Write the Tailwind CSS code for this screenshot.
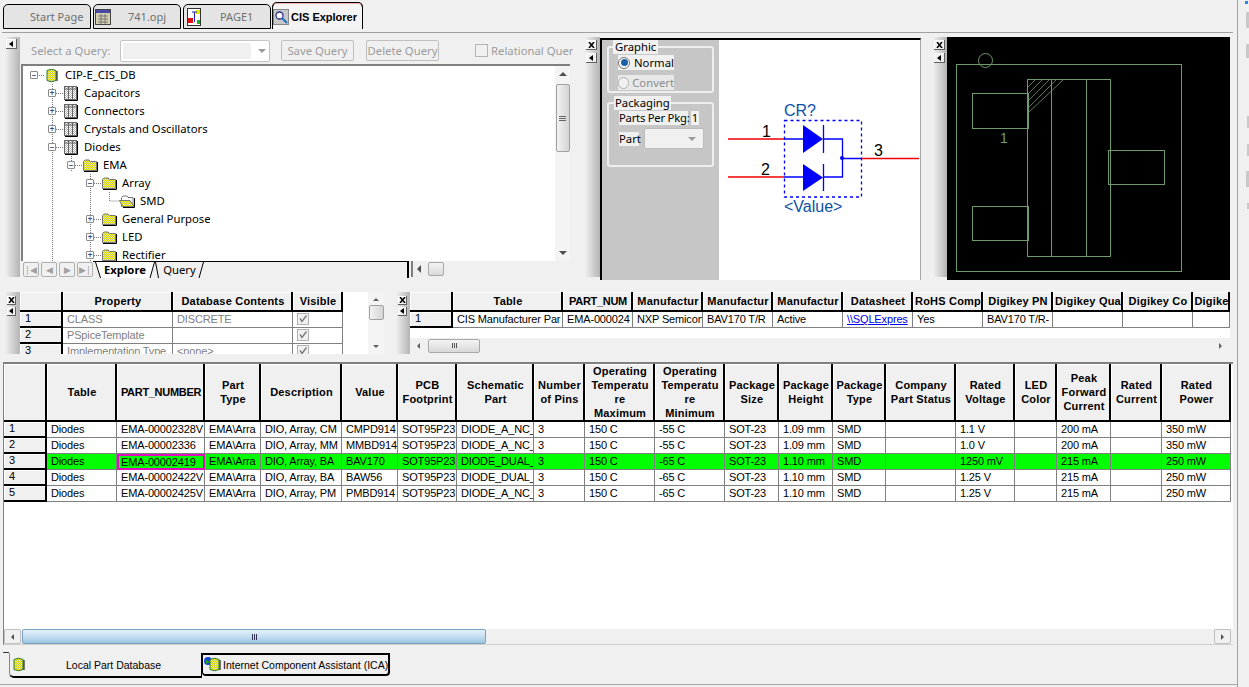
<!DOCTYPE html>
<html lang="en">
<head>
<meta charset="UTF-8">
<title>CIS Explorer</title>
<script src="https://cdn.jsdelivr.net/npm/@tailwindcss/browser@4"></script>
</head>
<body class="bg-[#f0f0f0] overflow-hidden">
<svg width="0" height="0" class="absolute">
  <defs>
    <pattern id="dither" width="2" height="2" patternUnits="userSpaceOnUse">
      <rect width="2" height="2" fill="#ffff00"/><rect width="1" height="1" fill="#c0c080"/><rect x="1" y="1" width="1" height="1" fill="#c0c080"/>
    </pattern>
    <pattern id="gridfill" width="2" height="2" patternUnits="userSpaceOnUse">
      <rect width="2" height="2" fill="#fff"/><rect width="1" height="1" fill="#b4b4b4"/><rect x="1" y="1" width="1" height="1" fill="#b4b4b4"/>
    </pattern>
    <symbol id="ic-table" viewBox="0 0 14 15">
      <rect x=".5" y=".5" width="12" height="13" fill="url(#gridfill)" stroke="#666"/>
      <path d="M.5 3H12.500M4.500 .5V13.500M8.500 .5V13.500" stroke="#666" fill="none"/>
      <path d="M13.500 1V14.500H1" stroke="#000" fill="none"/>
    </symbol>
    <symbol id="ic-folder" viewBox="0 0 15 13">
      <path d="M.5 11.500V2.500L2 1H6L7.500 2.500H13.500V11.500Z" fill="url(#dither)" stroke="#777"/>
      <path d="M14.500 3V12.500H1" stroke="#000" fill="none"/>
    </symbol>
    <symbol id="ic-open" viewBox="0 0 16 13">
      <path d="M2.500 11.500V2.500L4 1H8L9 2.500H14V11.500Z" fill="#fff" stroke="#777"/>
      <path d="M.5 5.500H11L15 11.500H3.500Z" fill="url(#dither)" stroke="#777"/>
      <path d="M15.500 3V12.500H4" stroke="#000" fill="none"/>
    </symbol>
    <symbol id="ic-db" viewBox="0 0 12 15">
      <path d="M1 2.500V12.500Q5.500 15 10 12.500V2.500Q5.500 0 1 2.500Z" fill="url(#dither)" stroke="#2c7a2c"/>
      <path d="M11 3V13" stroke="#000"/>
    </symbol>
  </defs>
</svg>

<div class="w-[1249px] h-[687px] flex text-black font-['Liberation_Sans',Arial,sans-serif] text-[11px] leading-[14px]">
  <div class="w-[1237px] h-[687px] flex flex-col shrink-0">

    <!-- document tabs -->
    <div class="h-[33px] ml-[2px] w-[1231px] border-b border-[#a0a0a0] flex items-start pt-[4px] pl-[1px] shrink-0 font-['Noto_Sans',sans-serif] text-[11px]">
      <div class="w-[88px] h-[25px] bg-[#e4e4e4] border border-black rounded-t-[5px] flex items-center pl-[26px] text-[#707070]">Start Page</div>
      <div class="ml-[2px] w-[88px] h-[25px] bg-[#e4e4e4] border border-black rounded-t-[5px] flex items-center text-[#707070]">
        <svg width="16" height="16" viewBox="0 0 16 16" class="ml-[1px]"><rect x=".5" y=".5" width="15" height="15" fill="#d4d0b0" stroke="#444"/><rect x="1" y="1" width="14" height="3" fill="#4848a8"/><path d="M3 7H13M3 10H13M3 13H13M6 5V15M10 5V15" stroke="#777"/></svg>
        <span class="ml-[17px]">741.opj</span>
      </div>
      <div class="ml-[2px] w-[88px] h-[25px] bg-[#e4e4e4] border border-black rounded-t-[5px] flex items-center text-[#707070]">
        <svg width="14" height="18" viewBox="0 0 14 18" class="ml-[3px]"><rect x=".5" y=".5" width="13" height="17" fill="#fff" stroke="#333"/><rect x="1" y="10" width="5" height="5" fill="#e01010"/><rect x="9" y="2" width="4" height="4" fill="#e8e800"/><rect x="10" y="12" width="3" height="4" fill="#20b020"/><path d="M5 4H10M7.500 4V14" stroke="#2020c0"/></svg>
        <span class="ml-[19px]">PAGE1</span>
      </div>
      <div class="ml-[1px] w-[91px] h-[26px] -mt-[1px] bg-[#f4f4f4] border border-black border-b-0 border-t-[#ffb0b0] shadow-[0_-1px_0_#000] rounded-t-[5px] flex items-center font-bold font-['Liberation_Sans',sans-serif]">
        <svg width="16" height="16" viewBox="0 0 16 16" class="mr-[2px]"><rect x=".5" y=".5" width="15" height="15" fill="#c8c8c8" stroke="#888"/><circle cx="6.500" cy="6.500" r="3.500" fill="#fff" stroke="#303090" stroke-width="1.300"/><path d="M9 9L14 14" stroke="#2070c0" stroke-width="2"/></svg>
        <span>CIS Explorer</span>
      </div>
    </div>

    <!-- upper panes -->
    <div class="flex h-[243px] mt-[4px] shrink-0">
      <div class="ml-[5px] w-[15px] h-[240px] bg-gradient-to-r from-[#f0f0f0] to-[#b4b4b4] pl-[1px] pt-[2px] shrink-0">
        <div data-btn="left"></div>
      </div>
      <div class="w-[553px] shrink-0 flex flex-col">
        <div class="h-[27px] flex items-center pl-[11px] text-[#9c9c9c] font-['Noto_Sans',sans-serif] text-[11.3px] shrink-0 overflow-hidden">
          <span class="w-[89px] shrink-0">Select a Query:</span>
          <div class="w-[150px] h-[22px] border border-[#c4c4c4] rounded-[2px] bg-white flex items-center p-[2px] shrink-0">
            <div class="w-[128px] h-[16px] bg-[#f0f0f0]"></div>
            <div class="ml-[7px] w-0 h-0 border-x-[4px] border-x-transparent border-t-[4px] border-t-[#9a9a9a]"></div>
          </div>
          <div class="ml-[11px] w-[73px] h-[21px] border border-[#c0c0c0] rounded-[2px] flex items-center justify-center shrink-0 whitespace-nowrap">Save Query</div>
          <div class="ml-[12px] w-[73px] h-[21px] border border-[#c0c0c0] rounded-[2px] flex items-center justify-center shrink-0 whitespace-nowrap">Delete Query</div>
          <div class="ml-[36px] w-[13px] h-[13px] border border-[#b4b4b4] shrink-0"></div>
          <span class="ml-[3px] whitespace-nowrap">Relational Query</span>
        </div>
        <div class="relative h-[197px] ml-[1px] w-[549px] border-t-2 border-l-2 border-[#808080] bg-white overflow-hidden shrink-0">
          <!-- connector lines of the tree -->
          <svg class="absolute left-0 top-0" width="140" height="197" viewBox="23 66 140 197">
            <g stroke="#777" stroke-dasharray="1 1" fill="none">
              <path d="M52.500 84V262M71.500 156V172M90.500 174V262M109.500 192V201H120"/>
              <path d="M37 75.500H45M56 93.500H64M56 111.500H64M56 129.500H64M56 147.500H64M75 165.500H83M94 183.500H102M94 219.500H102M94 237.500H102M94 255.500H102"/>
            </g>
          </svg>
          <div id="tree" class="relative font-['Noto_Sans',sans-serif] text-[11.3px] leading-[18px]"></div>
          <div class="absolute right-0 top-0 w-[15px] h-full bg-[#f4f4f4] flex flex-col items-center">
            <div class="mt-[6px] w-0 h-0 border-x-[4px] border-x-transparent border-b-[4px] border-b-[#505050]"></div>
            <div class="mt-[8px] w-[14px] h-[68px] rounded-[2px] border border-[#a0a0a0] bg-gradient-to-r from-[#f2f2f2] to-[#d4d4d4] flex flex-col items-center justify-center gap-[1px]">
              <div class="w-[7px] h-px bg-[#666]"></div><div class="w-[7px] h-px bg-[#666]"></div><div class="w-[7px] h-px bg-[#666]"></div>
            </div>
            <div class="mt-auto mb-[6px] w-0 h-0 border-x-[4px] border-x-transparent border-t-[4px] border-t-[#505050]"></div>
          </div>
        </div>
        <div class="h-[17px] ml-[3px] flex shrink-0 font-['Noto_Sans',sans-serif] text-[11.3px]">
          <div class="flex gap-[2px] pt-[1px]">
            <div class="w-[16px] h-[15px] border border-[#b0b0b0] rounded-[2px] text-[#a0a0a0] text-[9px] leading-[13px] text-center">|◀</div>
            <div class="w-[16px] h-[15px] border border-[#b0b0b0] rounded-[2px] text-[#a0a0a0] text-[9px] leading-[13px] text-center">◀</div>
            <div class="w-[16px] h-[15px] border border-[#b0b0b0] rounded-[2px] text-[#a0a0a0] text-[9px] leading-[13px] text-center">▶</div>
            <div class="w-[16px] h-[15px] border border-[#b0b0b0] rounded-[2px] text-[#a0a0a0] text-[9px] leading-[13px] text-center">▶|</div>
          </div>
          <div class="w-[316px] border-t border-r-2 border-black flex h-[17px] pl-[2px]">
            <div class="relative w-[60px] h-[16px] text-center leading-[16px] font-bold">
              <svg class="absolute left-0 top-0" width="60" height="16"><path d="M0 0L5 16H55L60 0Z" fill="#fff"/><path d="M.5 0L5.500 16M59.500 0L55 16" stroke="#000" fill="none"/></svg>
              <span class="relative">Explore</span>
            </div>
            <div class="relative w-[49px] h-[16px] text-center leading-[16px]">
              <svg class="absolute left-0 top-0" width="49" height="16"><path d="M.5 0L3.500 16M48.500 0L44 16" stroke="#000" fill="none"/></svg>
              <span class="relative">Query</span>
            </div>
          </div>
          <div class="ml-[2px] w-[155px] h-[16px] flex items-center border-l-2 border-[#808080] pl-[4px]">
            <div class="w-0 h-0 border-y-[4px] border-y-transparent border-r-[4px] border-r-[#505050]"></div>
            <div class="ml-[7px] w-[16px] h-[14px] border border-[#a8a8a8] rounded-[2px] bg-gradient-to-b from-[#f4f4f4] to-[#d8d8d8]"></div>
          </div>
        </div>
      </div>

      <div class="ml-[12px] w-[15px] h-[240px] bg-gradient-to-r from-[#f0f0f0] to-[#b4b4b4] pt-[3px] pl-[1px] shrink-0 flex flex-col gap-[3px]">
        <div data-btn="close"></div><div data-btn="left"></div>
      </div>
      <div class="w-[321px] h-[242px] border-l-2 border-t-2 border-black border-r-[#a8a8a8] border-r flex shrink-0 mt-px">
        <div class="w-[117px] h-full bg-[#c6c6c6] pl-[5px] pt-[6px] font-['Noto_Sans',sans-serif] text-[11.3px] shrink-0">
          <div class="w-[107px] h-[47px] border-2 border-[#eeeeee] rounded-[3px]">
            <div class="-mt-[8px] ml-[4px] w-fit bg-[#f0f0f0] px-[2px]">Graphic</div>
            <div class="ml-[9px] mt-[1px] w-[56px] h-[15px] bg-[#f0f0f0] flex items-center">
              <div class="w-[12px] h-[12px] rounded-full border border-[#707070] bg-white flex items-center justify-center"><div class="w-[7px] h-[7px] rounded-full bg-[#1a5fa8]"></div></div>
              <span class="ml-[4px]">Normal</span>
            </div>
            <div class="ml-[9px] mt-[5px] w-[56px] h-[15px] bg-[#e8e8e8] flex items-center text-[#8c8c8c]">
              <div class="w-[12px] h-[12px] rounded-full border border-[#b0b0b0] bg-[#f0f0f0]"></div>
              <span class="ml-[3px]">Convert</span>
            </div>
          </div>
          <div class="mt-[9px] w-[107px] h-[65px] border-2 border-[#eeeeee] rounded-[3px]">
            <div class="-mt-[8px] ml-[5px] w-fit bg-[#f0f0f0] px-[1px]">Packaging</div>
            <div class="ml-[10px] mt-[1px] flex">
              <span class="bg-[#f0f0f0] w-[69px] whitespace-nowrap tracking-[-0.25px]">Parts Per Pkg:</span>
              <span class="ml-[3px] bg-[#f0f0f0] w-[8px] text-center">1</span>
            </div>
            <div class="ml-[10px] mt-[3px] flex items-center">
              <span class="bg-[#f0f0f0] w-[20px]">Part</span>
              <div class="ml-[5px] w-[60px] h-[21px] bg-[#f0f0f0] border border-[#bcbcbc] rounded-[2px] flex items-center justify-end pr-[7px]">
                <div class="w-0 h-0 border-x-[4px] border-x-transparent border-t-[4px] border-t-[#9a9a9a]"></div>
              </div>
            </div>
          </div>
        </div>
        <svg width="201" height="240" viewBox="719 40 201 240" class="bg-white shrink-0">
          <g fill="none" stroke-width="1.300">
            <path d="M728 139H784M728 177H784M861 158.500H919" stroke="#f00000"/>
            <path d="M784 139H803M823 139H842.500V177H823M784 177H803M842.500 158.500H861" stroke="#0000ff"/>
            <path d="M823.500 125V153M823.500 164V191" stroke="#0000ff"/>
            <rect x="784.500" y="120.500" width="77" height="76.500" stroke="#0000ff" stroke-dasharray="3 3"/>
          </g>
          <path d="M803 125L823 139L803 153ZM803 164L823 177.500L803 191Z" fill="#0000ff"/>
          <circle cx="842" cy="158" r="2" fill="#0000ff"/>
          <g font-family="Liberation Sans, sans-serif" font-size="16">
            <text x="762" y="137">1</text>
            <text x="761" y="175">2</text>
            <text x="874" y="156">3</text>
            <text x="784" y="116" fill="#0a50a8">CR?</text>
            <text x="784" y="212" fill="#0a50a8">&lt;Value&gt;</text>
          </g>
        </svg>
      </div>

      <div class="ml-[12px] w-[14px] h-[240px] bg-gradient-to-r from-[#f0f0f0] to-[#b4b4b4] pt-[3px] pl-[1px] shrink-0 flex flex-col gap-[3px]">
        <div data-btn="close"></div><div data-btn="left"></div>
      </div>
      <svg width="283" height="243" viewBox="947 37 283 243" class="bg-black shrink-0">
        <g fill="none" stroke="#6f9a6c" stroke-width="1">
          <rect x="956.500" y="64.500" width="225" height="207"/>
          <circle cx="985.500" cy="60.500" r="7"/>
          <rect x="1027.500" y="79.500" width="83" height="177"/>
          <path d="M1051.500 79V256M1086.500 79V256"/>
          <rect x="972.500" y="93.500" width="56" height="35"/>
          <rect x="972.500" y="206.500" width="56" height="34"/>
          <rect x="1108.500" y="150.500" width="56" height="34"/>
          <path d="M1035 80L1028 87M1042 80L1028 94M1049 80L1028 101M1056 80L1028 108M1063 80L1028 113" stroke-width=".8"/>
        </g>
        <text x="1000" y="143" fill="#6f9a6c" font-family="Liberation Sans, sans-serif" font-size="14">1</text>
      </svg>
    </div>

    <!-- property and manufacturer grids -->
    <div class="flex h-[62px] mt-[12px] shrink-0">
      <div class="ml-[5px] w-[15px] h-[62px] bg-gradient-to-r from-[#f0f0f0] to-[#b4b4b4] pt-[4px] pl-[2px] shrink-0 flex flex-col gap-[2px]">
        <div data-btn="close" data-small="1"></div><div data-btn="left" data-small="1"></div>
      </div>
      <div class="w-[348px] h-[62px] bg-white overflow-hidden shrink-0">
        <div id="props" class="grid grid-cols-[43px_110px_120px_50px] w-[323px]"></div>
      </div>
      <div class="w-[16px] h-[62px] bg-[#f4f4f4] flex flex-col items-center shrink-0">
        <div class="mt-[6px] w-0 h-0 border-x-[3px] border-x-transparent border-b-[3px] border-b-[#606060]"></div>
        <div class="mt-[4px] w-[15px] h-[15px] border border-[#a0a0a0] rounded-[2px] bg-gradient-to-r from-[#f2f2f2] to-[#d4d4d4]"></div>
        <div class="mt-auto mb-[6px] w-0 h-0 border-x-[3px] border-x-transparent border-t-[3px] border-t-[#606060]"></div>
      </div>
      <div class="ml-[12px] w-[14px] h-[62px] bg-gradient-to-r from-[#f0f0f0] to-[#b4b4b4] pt-[4px] pl-[2px] shrink-0 flex flex-col gap-[2px]">
        <div data-btn="close" data-small="1"></div><div data-btn="left" data-small="1"></div>
      </div>
      <div class="w-[820px] h-[62px] flex flex-col shrink-0">
        <div class="h-[46px] bg-white overflow-hidden shrink-0">
          <div id="mfr" class="grid grid-cols-[43px_110px_70px_70px_70px_70px_70px_70px_70px_70px_70px_37px] w-[820px]"></div>
        </div>
        <div class="h-[15px] bg-[#f0f0f0] flex items-center px-[3px]">
          <div class="w-0 h-0 border-y-[3px] border-y-transparent border-r-[3px] border-r-[#606060] ml-[4px]"></div>
          <div class="ml-[8px] w-[52px] h-[14px] border border-[#a8a8a8] rounded-[2px] bg-gradient-to-b from-[#f4f4f4] to-[#d8d8d8] flex items-center justify-center gap-[1px]">
            <div class="w-px h-[5px] bg-[#555]"></div><div class="w-px h-[5px] bg-[#555]"></div><div class="w-px h-[5px] bg-[#555]"></div>
          </div>
          <div class="ml-auto mr-[5px] w-0 h-0 border-y-[3px] border-y-transparent border-l-[3px] border-l-[#606060]"></div>
        </div>
      </div>
    </div>

    <!-- main parts grid -->
    <div class="ml-[3px] w-[1230px] h-[283px] mt-[8px] border-l border-t-2 border-[#808080] flex flex-col shrink-0">
      <div class="flex-1 bg-white overflow-hidden">
        <div id="parts" class="grid grid-cols-[43px_70px_88px_56px_81px_56px_59px_77px_51px_70px_70px_54px_54px_53px_70px_59px_42px_54px_51px_69px] w-[1227px]"></div>
      </div>
      <div class="h-[16px] bg-[#f0f0f0] flex items-center shrink-0 border-b border-[#d0d0d0]">
        <div class="w-[17px] h-[15px] border border-[#c0c0c0] rounded-[2px] flex items-center justify-center bg-[#f0f0f0]">
          <div class="w-0 h-0 border-y-[3px] border-y-transparent border-r-[3px] border-r-[#505050]"></div>
        </div>
        <div class="ml-[1px] w-[464px] h-[15px] border border-[#7da2c0] rounded-[2px] bg-gradient-to-b from-[#e4f1fa] via-[#c4def0] to-[#9cc4e0] flex items-center justify-center gap-[1px]">
          <div class="w-px h-[6px] bg-[#335]"></div><div class="w-px h-[6px] bg-[#335]"></div><div class="w-px h-[6px] bg-[#335]"></div>
        </div>
        <div class="ml-auto mr-[2px] w-[17px] h-[15px] border border-[#c0c0c0] rounded-[2px] flex items-center justify-center">
          <div class="w-0 h-0 border-y-[3px] border-y-transparent border-l-[3px] border-l-[#505050]"></div>
        </div>
      </div>
    </div>

    <!-- database tabs -->
    <div class="flex ml-[3px] mt-[7px] shrink-0 text-[10.500px]">
      <div class="w-[6px] h-px bg-[#333] shrink-0"></div>
      <div class="w-[193px] h-[25px] mt-px border-b-2 border-l border-r border-black border-l-[#888] rounded-bl-[5px] flex items-center pl-[3px]">
        <svg width="12" height="15" class="shrink-0"><use href="#ic-db"/></svg>
        <span class="ml-[41px]">Local Part Database</span>
      </div>
      <div class="w-[188px] h-[23px] mt-px border-2 border-l border-black rounded-b-[4px] flex items-center">
        <svg width="18" height="15" viewBox="0 0 18 15" class="shrink-0 ml-[1px]"><circle cx="4" cy="4" r="4" fill="#1040e0"/><path d="M1 2L6 5L2 7Z" fill="#20a020"/><use href="#ic-db" x="5" width="12" height="15"/></svg>
        <span class="whitespace-nowrap ml-px">Internet Component Assistant (ICA)</span>
      </div>
    </div>
    <div class="mt-auto h-[3px] border-t border-[#a8a8a8] w-full"></div>
  </div>

  <!-- clipped strip at the right of the window -->
  <div class="w-[12px] h-[687px] border-l border-[#a0a0a0] flex flex-col items-end pt-[1px] shrink-0">
    <div class="w-[3px] h-[3px] bg-[#3080f0] mr-[1px]"></div>
    <div class="mt-[8px] w-[3px] h-[16px] bg-[#c8c8c8]"></div>
    <div class="mt-[16px] w-[3px] h-[14px] bg-[#c8c8c8]"></div>
    <div class="mt-[58px] w-[2px] h-[12px] bg-[#c8c8c8]"></div>
    <div class="mt-[16px] w-[2px] h-[12px] bg-[#c8c8c8]"></div>
    <div class="mt-[15px] w-[3px] h-[16px] bg-[#c8c8c8]"></div>
    <div class="mt-[16px] w-[2px] h-[6px] bg-[#c8c8c8]"></div>
  </div>
</div>

<script>
  // tree rows: [left of expander, expander, icon, label]
  const treeRows = [
    [7, '-', 'db', 'CIP-E_CIS_DB'],
    [25, '+', 'table', 'Capacitors'],
    [25, '+', 'table', 'Connectors'],
    [25, '+', 'table', 'Crystals and Oscillators'],
    [25, '-', 'table', 'Diodes'],
    [44, '-', 'folder', 'EMA'],
    [63, '-', 'folder', 'Array'],
    [80, '', 'open', 'SMD'],
    [63, '+', 'folder', 'General Purpose'],
    [63, '+', 'folder', 'LED'],
    [63, '+', 'folder', 'Rectifier']
  ];
  const iconSizes = { db: [12, 15, 'mr-[7px]'], table: [14, 15, 'mr-[6px]'], folder: [15, 13, 'mr-[5px]'], open: [16, 13, 'mr-[5px]'] };
  document.getElementById('tree').innerHTML = treeRows.map(([x, exp, icon, label]) => {
    const [w, h, gap] = iconSizes[icon];
    const box = exp === ''
      ? '<span class="w-[16px] shrink-0"></span>'
      : `<span class="w-[8px] h-[8px] border border-[#8c8c8c] rounded-[1px] bg-white flex items-center justify-center text-[#3a4a80] text-[8px] leading-[6px] shrink-0 font-bold">${exp === '-' ? '−' : '+'}</span><span class="w-[8px] shrink-0"></span>`;
    return `<div class="h-[18px] flex items-center" style="padding-left:${x}px">${box}<svg width="${w}" height="${h}" class="shrink-0 ${gap}"><use href="#ic-${icon}"/></svg><span class="whitespace-nowrap">${label}</span></div>`;
  }).join('');

  // all-capital headings run narrower than mixed ones in the reference
  const headCell = t => `<div class="flex items-center justify-center text-center font-bold pl-[2px] bg-[#f0f0f0] border-r-2 border-b-2 border-black shadow-[inset_1px_1px_0_#fff] overflow-hidden whitespace-nowrap ${t === t.toUpperCase() ? 'tracking-[-0.3px]' : 'tracking-[0.2px]'}">${t}</div>`;
  const rowHead = t => `<div class="h-[16px] pl-[5px] bg-[#f0f0f0] border-r-2 border-b-2 border-black shadow-[inset_1px_1px_0_#fff] leading-[13px]">${t}</div>`;
  const cell = (t, cls) => `<div class="h-[16px] pl-[4px] border-r border-b border-[#808080] leading-[15px] tracking-[-0.15px] overflow-hidden whitespace-nowrap ${cls}">${t}</div>`;
  const tick = '<svg width="12" height="12" viewBox="0 0 12 12" class="mt-[1px]"><rect x=".5" y=".5" width="11" height="11" fill="#f0f0f0" stroke="#b0b0b0"/><path d="M3 5.500L5 8.500L9.500 2.500" fill="none" stroke="#808080" stroke-width="1.500"/></svg>';

  document.getElementById('props').innerHTML =
    ['', 'Property', 'Database Contents', 'Visible'].map(t => `<div class="h-[20px] grid">${headCell(t)}</div>`).join('') +
    [['1', 'CLASS', 'DISCRETE'], ['2', 'PSpiceTemplate', ''], ['3', 'Implementation Type', '&lt;none&gt;']].map(r =>
      rowHead(r[0]) + cell(r[1], 'text-[#808080]') + cell(r[2], 'text-[#808080]') + cell(tick, '')
    ).join('');

  document.getElementById('mfr').innerHTML =
    ['', 'Table', 'PART_NUM', 'Manufactur', 'Manufactur', 'Manufactur', 'Datasheet', 'RoHS Comp', 'Digikey PN', 'Digikey Qua', 'Digikey Co', 'Digike']
      .map(t => `<div class="h-[20px] grid">${headCell(t)}</div>`).join('') +
    rowHead('1') +
    ['CIS Manufacturer Par', 'EMA-000024', 'NXP Semicon', 'BAV170 T/R', 'Active',
     '<span class="text-[#0000ee] underline">\\\\SQLExpres</span>', 'Yes', 'BAV170 T/R-', '', '', '']
      .map(t => cell(t, '')).join('');

  const partHead = ['', 'Table', 'PART_NUMBER', 'Part<br>Type', 'Description', 'Value', 'PCB<br>Footprint', 'Schematic<br>Part',
    'Number<br>of Pins', 'Operating<br>Temperatu<br>re<br>Maximum', 'Operating<br>Temperatu<br>re<br>Minimum', 'Package<br>Size',
    'Package<br>Height', 'Package<br>Type', 'Company<br>Part Status', 'Rated<br>Voltage', 'LED<br>Color', 'Peak<br>Forward<br>Current',
    'Rated<br>Current', 'Rated<br>Power'];
  const parts = [
    ['EMA-00002328V', 'DIO, Array, CM', 'CMPD914', 'DIODE_A_NC_', '-55 C', '1.09 mm', '1.1 V', '200 mA', '350 mW'],
    ['EMA-00002336', 'DIO, Array, MM', 'MMBD914', 'DIODE_A_NC_', '-55 C', '1.09 mm', '1.0 V', '200 mA', '350 mW'],
    ['EMA-00002419', 'DIO, Array, BA', 'BAV170', 'DIODE_DUAL_', '-65 C', '1.10 mm', '1250 mV', '215 mA', '250 mW'],
    ['EMA-00002422V', 'DIO, Array, BA', 'BAW56', 'DIODE_DUAL_', '-65 C', '1.10 mm', '1.25 V', '215 mA', '250 mW'],
    ['EMA-00002425V', 'DIO, Array, PM', 'PMBD914', 'DIODE_A_NC_', '-65 C', '1.10 mm', '1.25 V', '215 mA', '250 mW']
  ];
  document.getElementById('parts').innerHTML =
    partHead.map(t => `<div class="h-[58px] grid">${headCell(t)}</div>`).join('') +
    parts.map((p, i) => {
      const selected = i === 2;
      const bg = selected ? 'bg-[#00ff00]' : '';
      const values = ['Diodes', p[0], 'EMA\\Arra', p[1], p[2], 'SOT95P23', p[3], '3', '150 C', p[4], 'SOT-23', p[5], 'SMD', '', p[6], '', p[7], '', p[8]];
      return rowHead(i + 1) + values.map((t, c) => selected && c === 1
        ? `<div class="h-[16px] pl-[2px] bg-[#00ff00] border-2 border-[#e010c0] leading-[12px] tracking-[-0.15px] overflow-hidden whitespace-nowrap">${t}</div>`
        : cell(t, bg)).join('');
    }).join('');

  // small sash buttons
  document.querySelectorAll('[data-btn]').forEach(el => {
    const size = el.dataset.small ? 'w-[9px] h-[9px]' : 'w-[11px] h-[10px]';
    el.className = size + ' bg-[#f0f0f0] border-r border-b border-[#606060] shadow-[inset_1px_1px_0_#fff] flex items-center justify-center';
    el.innerHTML = el.dataset.btn === 'close'
      ? '<svg width="7" height="6" viewBox="0 0 7 6"><path d="M1 0L6 6M6 0L1 6" stroke="#000" stroke-width="1.500"/></svg>'
      : '<svg width="4" height="6" viewBox="0 0 4 6"><path d="M4 0V6L0 3Z" fill="#000"/></svg>';
  });
</script>
</body>
</html>
